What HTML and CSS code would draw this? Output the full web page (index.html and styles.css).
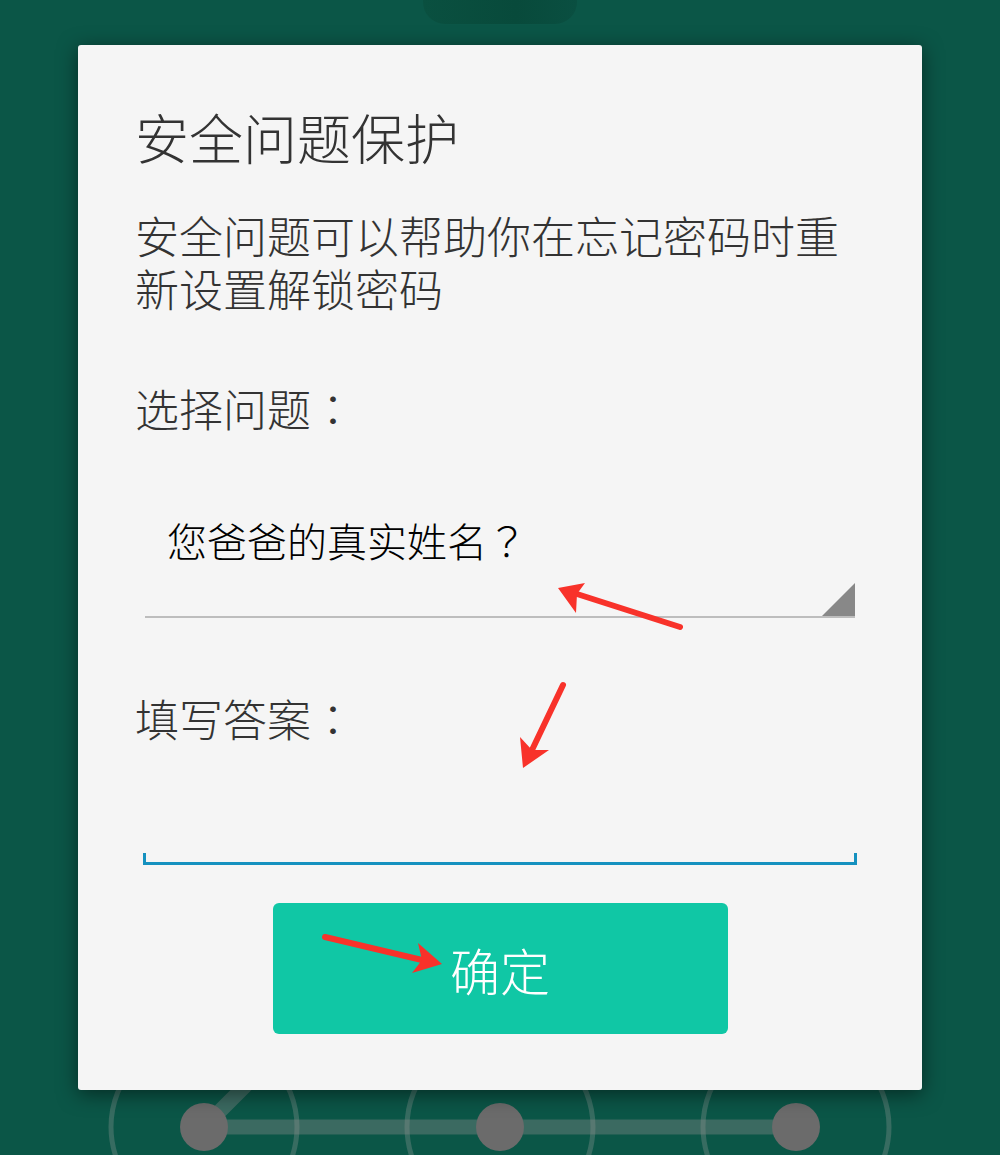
FILE: index.html
```html
<!DOCTYPE html>
<html lang="zh-CN">
<head>
    <meta charset="UTF-8">
    <meta name="viewport" content="width=device-width, initial-scale=1.0">
    <title>安全问题保护</title>
    <link rel="stylesheet" href="styles.css">
</head>
<body>

<!-- lock pattern behind the dialog -->
<svg class="pattern" width="1000" height="1155" viewBox="0 0 1000 1155">
    <circle cx="204" cy="1127" r="93" class="ring" />
    <circle cx="500" cy="1127" r="93" class="ring" />
    <circle cx="796" cy="1127" r="93" class="ring" />
    <line x1="204" y1="1127" x2="796" y2="1127" class="trail" />
    <line x1="204" y1="1127" x2="500" y2="831" class="trail" />
    <circle cx="204" cy="1127" r="24" class="dot" />
    <circle cx="500" cy="1127" r="24" class="dot" />
    <circle cx="796" cy="1127" r="24" class="dot" />
</svg>

<div class="tab"></div>

<div id="dialog">
    <div class="title">安全问题保护</div>
    <div class="message">安全问题可以帮助你在忘记密码时重新设置解锁密码</div>

    <div class="label label-question">选择问题<span class="punct" lang="zh-TW">：</span></div>
    <div class="spinner">
        <span class="spinner-text">您爸爸的真实姓名<span class="punct" lang="zh-TW">？</span></span>
        <span class="spinner-arrow"></span>
    </div>

    <div class="label label-answer">填写答案<span class="punct" lang="zh-TW">：</span></div>
    <div class="answer">
        <div class="answer-line"></div>
    </div>

    <button class="button ok">确定</button>
</div>

<!-- red annotation arrows -->
<svg class="marks" width="1000" height="1155" viewBox="0 0 1000 1155">
    <line x1="680" y1="627" x2="577" y2="594" class="shaft" />
    <polygon points="558,588 585,583 577,594 576,613" class="head" />

    <line x1="563" y1="685" x2="532" y2="750" class="shaft" />
    <polygon points="523,768 520,737 532,750 549,750" class="head" />

    <line x1="325" y1="937" x2="422" y2="960" class="shaft" />
    <polygon points="442,964 418,943 422,960 412,973" class="head" />
</svg>

</body>
</html>
```

FILE: styles.css
```css
/* General Reset */
* {
    margin: 0;
    padding: 0;
    box-sizing: border-box;
    font-family: "Noto Sans CJK SC", "Noto Sans", sans-serif;
    font-weight: 300;
}

body {
    width: 1000px;
    height: 1155px;
    overflow: hidden;
    background-color: #0b5647;
    position: relative;
}

.pattern,
.marks {
    position: absolute;
    left: 0;
    top: 0;
    pointer-events: none;
}

.ring {
    fill: none;
    stroke: rgba(160, 160, 160, 0.3);
    stroke-width: 5;
}

.trail {
    stroke: rgba(140, 140, 140, 0.38);
    stroke-width: 15;
}

.dot {
    fill: #6b6b6b;
}

.tab {
    width: 154px;
    height: 24px;
    margin: 0 auto;
    background: linear-gradient(90deg, #0a5040, #084a3b 60%, #0a4f41);
    border-radius: 0 0 22px 22px;
}

#dialog {
    position: relative;
    width: 844px;
    height: 1045px;
    margin: 21px 0 0 78px;
    padding: 60px 57px 0 57px;
    background-color: #f5f5f5;
    border-radius: 3px;
    box-shadow: 0 4px 20px rgba(0, 0, 0, 0.5);
}

/* centred full-width punctuation, as on the device */
.punct {
    font-family: "Noto Sans CJK TC", "Noto Sans CJK SC", sans-serif;
}

.title {
    font-size: 54px;
    line-height: 64px;
    color: #333;
}

.message {
    margin-top: 40px;
    font-size: 44px;
    line-height: 53px;
    color: #333;
}

.label {
    font-size: 44px;
    line-height: 54px;
    color: #333;
}

.label-question {
    margin-top: 66px;
}

.spinner {
    position: relative;
    height: 113px;
    margin: 70px 10px 0 10px;
    padding-left: 22px;
    border-bottom: 2px solid #bdbdbd;
}

.spinner-text {
    display: block;
    font-size: 40px;
    line-height: 70px;
    color: #000;
}

.spinner-arrow {
    position: absolute;
    right: 0;
    bottom: 0;
    width: 0;
    height: 0;
    border-left: 33px solid transparent;
    border-bottom: 33px solid #888;
}

.label-answer {
    margin-top: 73px;
}

.answer {
    display: flex;
    align-items: flex-end;
    height: 120px;
    margin: 0 8px;
}

.answer-line {
    width: 100%;
    height: 12px;
    border: 3px solid #1591bf;
    border-top: none;
}

.button {
    display: block;
    width: 455px;
    height: 131px;
    margin: 38px auto 0 auto;
    font-size: 50px;
    color: #fff;
    background-color: #10c7a5;
    border: none;
    border-radius: 6px;
    cursor: pointer;
}

.shaft {
    stroke: #f8322a;
    stroke-width: 6;
    stroke-linecap: round;
}

.head {
    fill: #f8322a;
}
```
